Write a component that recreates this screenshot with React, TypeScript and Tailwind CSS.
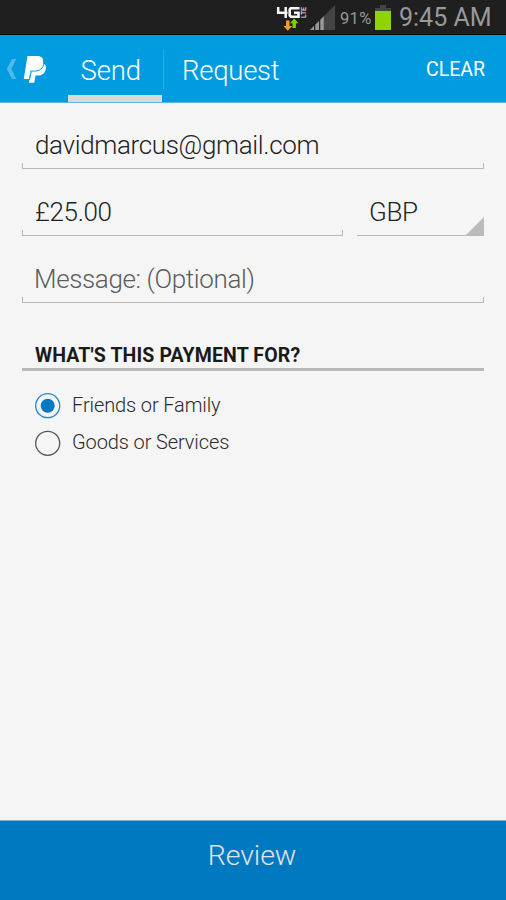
import React from "react";

function StatusBar() {
  return (
    <div className="flex h-[35px] items-start border-b border-[#080808] bg-[#1f1f1f] pl-[276px] text-[#999]">
      <svg className="mt-[5px] h-[27px] w-[31px] shrink-0" viewBox="0 0 31 27" fill="none">
        <path d="M2.200 2V7.800h9.300M9.700 2v11" stroke="#f4f4f4" strokeWidth="2.500" />
        <path d="M23.500 3.300h-8.800L13.700 4.500v6l1.200 1.200h7.600V7.700H18" stroke="#f4f4f4" strokeWidth="2.600" />
        <text
          x="0"
          y="0"
          transform="translate(30 13) rotate(-90)"
          textLength="11"
          lengthAdjust="spacingAndGlyphs"
          fill="#e4e4e4"
          className="text-[7px] font-medium"
        >
          LTE
        </text>
        <path d="M10.100 15.500h3.400v5.500h2.600l-4.300 4.700-4.300-4.700h2.600z" fill="#ff9a2e" />
        <path d="M16.500 23h3.400v-4.800h2.600l-4.300-4.700-4.300 4.700h2.600z" fill="#7fd000" />
      </svg>
      <svg className="ml-[2px] mt-[5px] h-[26px] w-[27px] shrink-0" viewBox="0 0 27 26">
        <path d="M1 25L26 0v25z" fill="#444" />
        <path d="M1 25l4-4v4zM6.300 25v-5.300l3.700-3.700v9zM11.300 25V14.700l3.500-3.500V25z" fill="#999" />
        <path d="M5.600 20v5M10.600 15v10" stroke="#1f1f1f" strokeWidth="0.900" />
      </svg>
      <span className="ml-[4px] mt-[7px] w-[35px] whitespace-nowrap text-[16.500px] leading-[24px] tracking-[0.300px]">91%</span>
      <svg className="mt-[4px] h-[27px] w-[17px] shrink-0" viewBox="0 0 17 27">
        <path d="M5 1h6v3h5v4H0V4h5z" fill="#444" />
        <path d="M0 7h16v19H0z" fill="#8fd400" />
      </svg>
      <span className="ml-[7px] mt-[3px] whitespace-nowrap text-[25px] leading-[30px]">9:45 AM</span>
    </div>
  );
}

function Header() {
  return (
    <header className="flex h-[68px] border-b border-[#61b7e2] bg-[#019cdf] text-white">
      <div className="flex w-[68px] shrink-0 pl-[6px] pt-[20px]">
        <svg className="mt-[3px] h-[22px] w-[12px]" viewBox="0 0 12 22">
          <path d="M6 1h4.300L5.300 11 10.300 21H6L.8 11z" fill="#4dbbe9" />
        </svg>
        <svg className="ml-[5px] h-[29px] w-[25px]" viewBox="0 0 25 29">
          <path d="M9 8h8.500c4.300 0 6 2.500 5.300 6-.9 4.800-4.100 6.500-8.300 6.500h-2l-1.200 7.300H6z" fill="#fff" />
          <path d="M4.500 1h9.300c5 0 7 2.500 6.200 6.900-.9 5-4.200 7.400-9.200 7.400H7.500L6 24H.8z" fill="#fff" />
          <path d="M21 7.500c-.6 6-4.300 8.600-9.600 8.600H8.300L6.500 25" fill="none" stroke="#019cdf" strokeWidth="1" />
        </svg>
      </div>
      <div className="flex w-[95px] shrink-0 flex-col justify-between">
        <span className="pl-[12.500px] pt-[16px] text-[27.500px] font-light leading-[40px] tracking-[-0.100px]">Send</span>
        <div className="h-[7px] w-[94px] bg-[#d9d9d9]" />
      </div>
      <div className="mt-[14px] h-[40px] w-px bg-[#2fa5e6]" />
      <span className="pl-[18px] pt-[16px] text-[27.500px] font-light leading-[40px] tracking-[-0.250px]">Request</span>
      <span className="ml-auto pr-[21px] pt-[20px] text-[19.500px] leading-[30px]">CLEAR</span>
    </header>
  );
}

function Field({ children, className }: { children: React.ReactNode; className: string }) {
  return (
    <div className={`flex flex-col justify-end text-[26px] font-light ${className}`}>
      <span className="whitespace-nowrap pl-[13px] leading-[30px]">{children}</span>
      <div className="mt-[3px] h-[6px] border-x border-b-[1.500px] border-[#b8b8b8]" />
    </div>
  );
}

function Option({ label, selected }: { label: string; selected?: boolean }) {
  return (
    <label className="flex h-[37px] items-center">
      <svg className="h-[26px] w-[26px] shrink-0" viewBox="0 0 26 26" fill="none">
        <circle cx="12.700" cy={selected ? 12.7 : 13.3} r="12" stroke={selected ? "#2388ca" : "#555"} strokeWidth="1.300" />
        {selected && <circle cx="12.700" cy="12.700" r="7" fill="#0079c1" />}
      </svg>
      <span className="ml-[11px] whitespace-nowrap pb-px text-[20px] font-light leading-[26px] tracking-[-0.110px] text-[#2a2a2a]">{label}</span>
    </label>
  );
}

export default function App() {
  return (
    <div className="flex h-[900px] w-[506px] flex-col overflow-hidden bg-[#f5f5f5] font-['Roboto',sans-serif] text-[#222]">
      <StatusBar />
      <Header />
      <main className="flex grow flex-col px-[22px]">
        <Field className="h-[66px] tracking-[-0.350px]">davidmarcus@gmail.com</Field>
        <div className="flex justify-between">
          <Field className="h-[67px] w-[321px] tracking-[-0.350px]">£25.00</Field>
          <div className="flex h-[67px] w-[127px] items-end justify-between border-b border-[#b8b8b8] text-[26px] font-light tracking-[-0.350px]">
            <span className="pb-[8px] pl-[12px] leading-[30px]">GBP</span>
            <svg className="h-[18px] w-[18px]" viewBox="0 0 18 18">
              <path d="M18 0v18H0z" fill="#bbb" />
            </svg>
          </div>
        </div>
        <Field className="h-[67px] tracking-[-0.370px] text-[#5c5c5c]"><span className="-ml-px">Message: (Optional)</span></Field>
        <h2 className="mt-[38px] h-[30px] border-b-[3px] border-[#b8b8b8] pl-[13px] text-[19.500px] font-bold leading-[29px] tracking-[0.130px] text-[#1a1a1a]">WHAT'S THIS PAYMENT FOR?</h2>
        <div className="flex flex-col pl-[13px] pt-[16px]">
          <Option label="Friends or Family" selected />
          <Option label="Goods or Services" />
        </div>
      </main>
      <button className="h-[80px] shrink-0 border-t border-[#7db5d8] bg-[#0079c1] pb-[9px] pr-[2px] text-[28.500px] font-light leading-[34px] tracking-[-0.100px] text-[#e3e3e3]">Review</button>
    </div>
  );
}
